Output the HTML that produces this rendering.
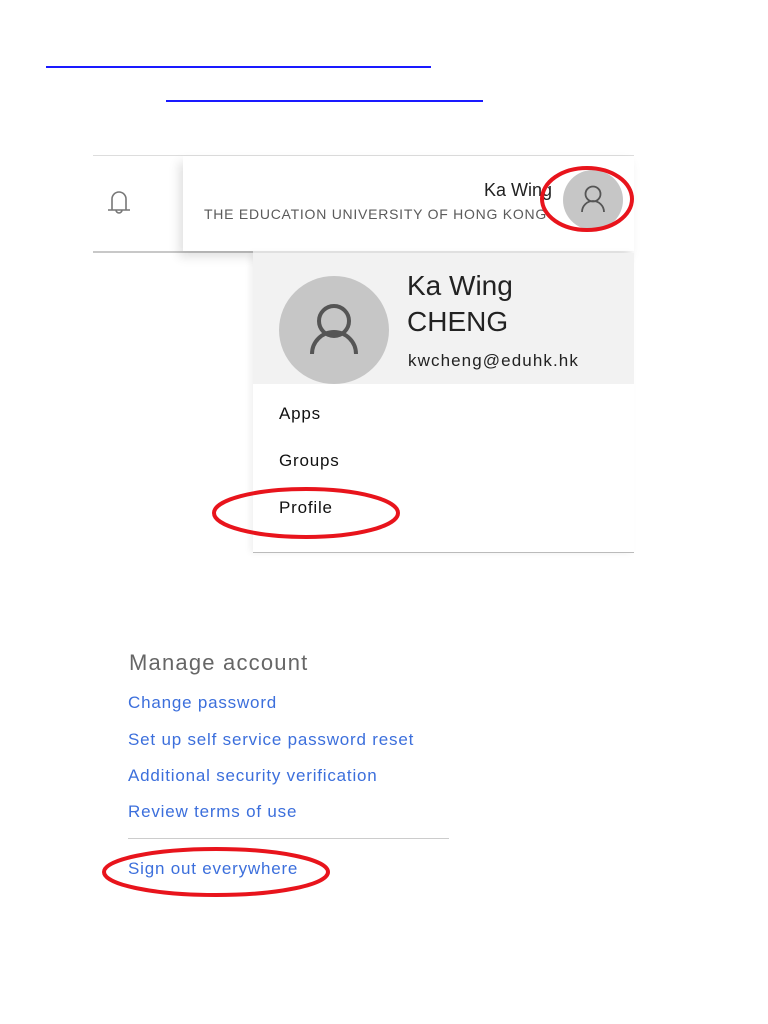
<!DOCTYPE html>
<html><head><meta charset="utf-8"><style>
body{margin:0;width:768px;height:1024px;background:#fff;position:relative;overflow:hidden;font-family:"Liberation Sans",sans-serif;}
.a{position:absolute;white-space:nowrap;}
.lk{color:#3c6fdc;font-size:17px;left:128px;letter-spacing:0.8px;}
</style></head><body>
<div class="a" style="left:46px;top:66px;width:385px;height:2px;background:#1a1aff"></div>
<div class="a" style="left:166px;top:100px;width:317px;height:2px;background:#1a1aff"></div>

<div class="a" style="left:93px;top:155px;width:541px;height:1px;background:#ddd"></div>
<div class="a" style="left:93px;top:251px;width:160px;height:2px;background:#c8c8c8"></div>
<div class="a" style="left:183px;top:156px;width:451px;height:95px;background:#fff;box-shadow:-4px 6px 10px rgba(0,0,0,0.12)"></div>
<svg class="a" style="left:106px;top:188px" width="26" height="30" viewBox="0 0 26 30"><path d="M6 22V11a7 7 0 0 1 14 0v11M2 22h22M10 22a3 3 0 0 0 6 0" fill="none" stroke="#777" stroke-width="1.6"/></svg>
<div class="a" style="left:204px;top:206px;font-size:14px;color:#5a5a5a;letter-spacing:0.75px">THE EDUCATION UNIVERSITY OF HONG KONG</div>
<div class="a" style="right:216px;top:180px;font-size:18px;color:#222;background:#fff;padding-left:2px">Ka Wing</div>
<div class="a" style="left:563px;top:170px;width:60px;height:60px;border-radius:50%;background:#c6c6c6"></div>
<svg class="a" style="left:563px;top:170px" width="60" height="60"><circle cx="30" cy="24" r="7.5" fill="none" stroke="#555" stroke-width="1.8"/><path d="M19 42a11 11 0 0 1 22 0" fill="none" stroke="#555" stroke-width="1.8"/></svg>

<div class="a" style="left:253px;top:253px;width:381px;height:300px;background:#fff;box-shadow:-3px 0 6px rgba(0,0,0,0.06)"></div>
<div class="a" style="left:253px;top:253px;width:381px;height:131px;background:#f2f2f2"></div>
<div class="a" style="left:253px;top:552px;width:381px;height:1px;background:#bbb"></div>
<div class="a" style="left:279px;top:276px;width:110px;height:108px;border-radius:50%;background:#c6c6c6"></div>
<svg class="a" style="left:279px;top:276px" width="110" height="110"><circle cx="55" cy="45" r="15" fill="none" stroke="#555" stroke-width="4"/><path d="M33 78a22 22 0 0 1 44 0" fill="none" stroke="#555" stroke-width="4"/></svg>
<div class="a" style="left:407px;top:268px;font-size:28px;color:#222;line-height:36px">Ka Wing<br>CHENG</div>
<div class="a" style="left:408px;top:351px;font-size:17px;color:#222;letter-spacing:1.1px">kwcheng@eduhk.hk</div>
<div class="a" style="left:279px;top:404px;font-size:17px;color:#111;letter-spacing:0.8px">Apps</div>
<div class="a" style="left:279px;top:451px;font-size:17px;color:#111;letter-spacing:0.8px">Groups</div>
<div class="a" style="left:279px;top:498px;font-size:17px;color:#111;letter-spacing:0.8px">Profile</div>

<div class="a" style="left:129px;top:650px;font-size:22px;color:#666;letter-spacing:1.2px">Manage account</div>
<div class="a lk" style="top:693px">Change password</div>
<div class="a lk" style="top:730px">Set up self service password reset</div>
<div class="a lk" style="top:766px">Additional security verification</div>
<div class="a lk" style="top:802px">Review terms of use</div>
<div class="a" style="left:128px;top:838px;width:321px;height:1px;background:#ccc"></div>
<div class="a lk" style="top:859px">Sign out everywhere</div>

<svg class="a" style="left:0;top:0" width="768" height="1024">
<g fill="none" stroke="#e8141c" stroke-width="4">
<ellipse cx="587" cy="199" rx="45" ry="31"/>
<ellipse cx="306" cy="513" rx="92" ry="24"/>
<ellipse cx="216" cy="872" rx="112" ry="23"/>
</g></svg>
</body></html>
